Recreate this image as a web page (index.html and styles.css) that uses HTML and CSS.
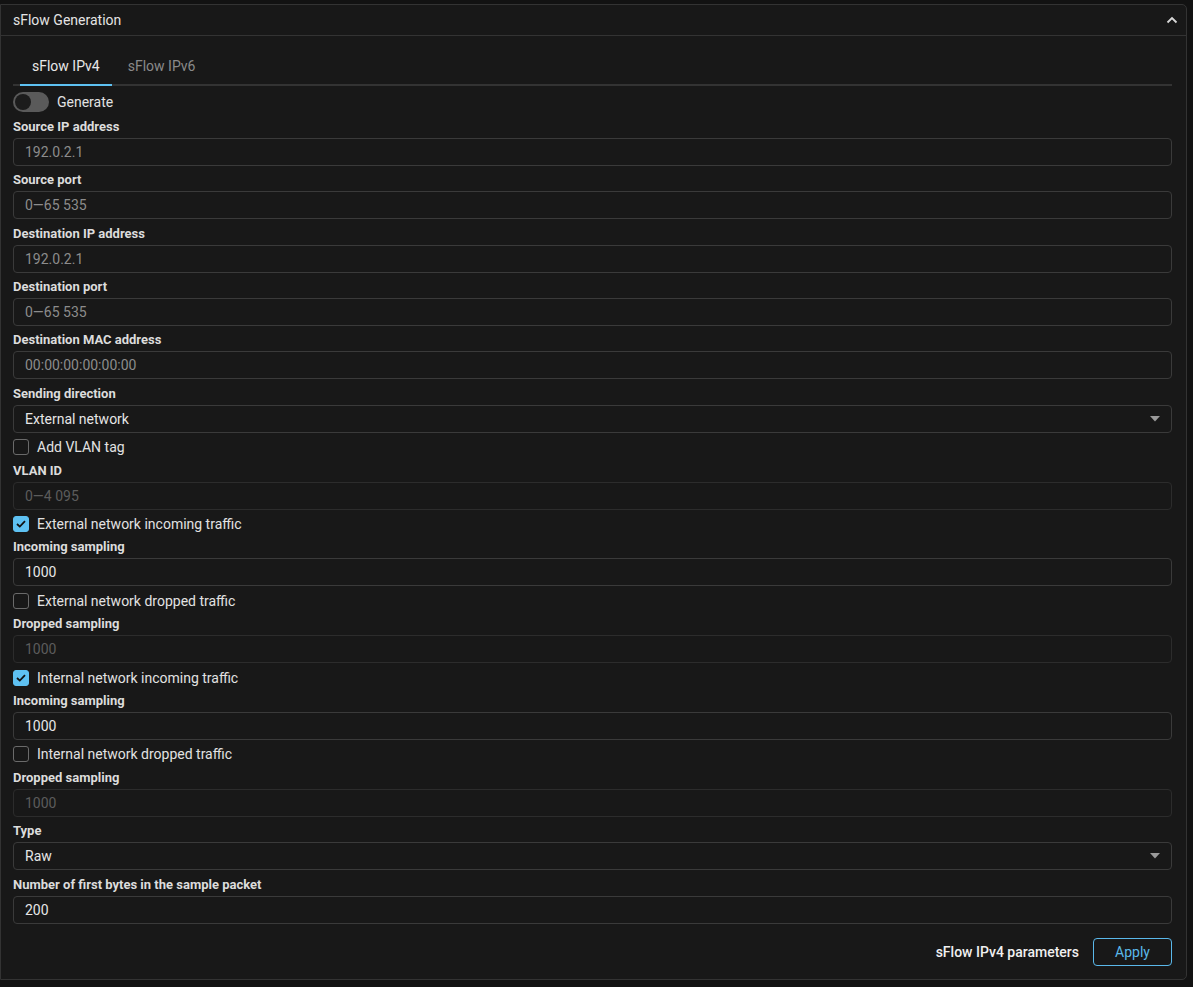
FILE: index.html
```html
<!DOCTYPE html>
<html lang="en">
<head>
    <meta charset="UTF-8">
    <title>sFlow Generation</title>
    <link rel="stylesheet" href="styles.css">
</head>
<body>
    <div class="card">
        <div class="card-header">
            <span>sFlow Generation</span>
            <svg class="chevron" width="12" height="8" viewBox="0 0 12 8"><path d="M1.5 6.5 L6 2 L10.5 6.5" fill="none" stroke="#d8d8d8" stroke-width="1.8"/></svg>
        </div>

        <div class="card-body">
            <div class="tabs">
                <div class="tab active">sFlow IPv4</div>
                <div class="tab">sFlow IPv6</div>
            </div>

            <div class="form">
                <label class="switch-row">
                    <span class="switch"><span class="knob"></span></span>
                    Generate
                </label>

                <div class="field">
                    <label>Source IP address</label>
                    <input type="text" placeholder="192.0.2.1">
                </div>
                <div class="field">
                    <label>Source port</label>
                    <input type="text" placeholder="0—65 535">
                </div>
                <div class="field">
                    <label>Destination IP address</label>
                    <input type="text" placeholder="192.0.2.1">
                </div>
                <div class="field">
                    <label>Destination port</label>
                    <input type="text" placeholder="0—65 535">
                </div>
                <div class="field">
                    <label>Destination MAC address</label>
                    <input type="text" placeholder="00:00:00:00:00:00">
                </div>
                <div class="field">
                    <label>Sending direction</label>
                    <div class="select">
                        <span>External network</span>
                        <svg width="10" height="6" viewBox="0 0 10 6"><path d="M0 0 H10 L5 5.5 Z" fill="#9a9a9a"/></svg>
                    </div>
                </div>

                <label class="check-row"><span class="box"></span>Add VLAN tag</label>
                <div class="field">
                    <label>VLAN ID</label>
                    <input type="text" placeholder="0—4 095" disabled>
                </div>

                <label class="check-row"><span class="box checked"><svg width="10" height="8" viewBox="0 0 10 8"><path d="M1 4 L3.8 6.6 L9 1.2" fill="none" stroke="#111" stroke-width="1.8"/></svg></span>External network incoming traffic</label>
                <div class="field">
                    <label>Incoming sampling</label>
                    <input type="text" value="1000">
                </div>

                <label class="check-row"><span class="box"></span>External network dropped traffic</label>
                <div class="field">
                    <label>Dropped sampling</label>
                    <input type="text" value="1000" disabled>
                </div>

                <label class="check-row"><span class="box checked"><svg width="10" height="8" viewBox="0 0 10 8"><path d="M1 4 L3.8 6.6 L9 1.2" fill="none" stroke="#111" stroke-width="1.8"/></svg></span>Internal network incoming traffic</label>
                <div class="field">
                    <label>Incoming sampling</label>
                    <input type="text" value="1000">
                </div>

                <label class="check-row"><span class="box"></span>Internal network dropped traffic</label>
                <div class="field">
                    <label>Dropped sampling</label>
                    <input type="text" value="1000" disabled>
                </div>

                <div class="field">
                    <label>Type</label>
                    <div class="select">
                        <span>Raw</span>
                        <svg width="10" height="6" viewBox="0 0 10 6"><path d="M0 0 H10 L5 5.5 Z" fill="#9a9a9a"/></svg>
                    </div>
                </div>
                <div class="field">
                    <label>Number of first bytes in the sample packet</label>
                    <input type="text" value="200">
                </div>
            </div>

            <div class="card-footer">
                <span class="footer-title">sFlow IPv4 parameters</span>
                <button class="btn-outline">Apply</button>
            </div>
        </div>
    </div>
</body>
</html>
```

FILE: styles.css
```css
body {
    margin: 0;
    padding: 4px 6px 7px 0;
    background: #121212;
    font-family: Roboto, 'Liberation Sans', sans-serif;
    font-size: 14px;
    color: #e2e2e2;
}

.card {
    background: #181818;
    border: 1px solid #333;
    border-radius: 0 5px 5px 0;
}

.card-header {
    height: 30px;
    display: flex;
    align-items: center;
    justify-content: space-between;
    padding: 0 8px 0 12px;
    border-bottom: 1px solid #333;
    color: #e4e4e4;
}

.chevron {
    margin-top: -1px;
}

.card-body {
    padding: 12px 14px 13px 12px;
}

.tabs {
    display: flex;
    gap: 4px;
    padding-left: 7px;
    border-bottom: 2px solid #333;
}

.tab {
    height: 36px;
    padding: 0 12px;
    display: flex;
    align-items: center;
    color: #8a8a8a;
    margin-bottom: -2px;
    border-bottom: 2px solid transparent;
}

.tab.active {
    color: #e8e8e8;
    border-bottom-color: #5ec1f2;
}

.form {
    display: flex;
    flex-direction: column;
    gap: 5.4px;
    margin-top: 6px;
}

.switch-row {
    display: flex;
    align-items: center;
    gap: 8px;
    height: 20px;
    margin-bottom: 0.5px;
    color: #e2e2e2;
}

.switch {
    width: 36px;
    height: 20px;
    border-radius: 10px;
    background: #5a5a5a;
    position: relative;
}

.knob {
    position: absolute;
    left: 2px;
    top: 2px;
    width: 16px;
    height: 16px;
    border-radius: 50%;
    background: #1c1c1c;
}

.field label {
    display: block;
    height: 17px;
    line-height: 17px;
    margin-bottom: 3px;
    font-size: 13px;
    font-weight: 700;
    color: #dcdcdc;
}

.field input,
.select {
    display: block;
    width: 100%;
    height: 28px;
    box-sizing: border-box;
    padding: 0 11px;
    background: #181818;
    border: 1px solid #3a3a3a;
    border-radius: 4px;
    font-family: Roboto, 'Liberation Sans', sans-serif;
    font-size: 14px;
    color: #e6e6e6;
    outline: none;
}

.field input::placeholder {
    color: #8c8c8c;
}

.field input:disabled {
    color: #5c5c5c;
    border-color: #2c2c2c;
}

.field input:disabled::placeholder {
    color: #5c5c5c;
}

.select {
    display: flex;
    align-items: center;
    justify-content: space-between;
    padding-right: 11px;
}

.check-row {
    display: flex;
    align-items: center;
    gap: 8px;
    height: 18px;
    color: #e2e2e2;
}

.box {
    width: 16px;
    height: 16px;
    box-sizing: border-box;
    border: 1.5px solid #6a6a6a;
    border-radius: 3px;
    display: flex;
    align-items: center;
    justify-content: center;
}

.box.checked {
    background: #5ec1f2;
    border-color: #5ec1f2;
}

.card-footer {
    display: flex;
    justify-content: flex-end;
    align-items: center;
    gap: 14px;
    margin-top: 14px;
}

.footer-title {
    font-weight: 500;
    color: #f0f0f0;
}

.btn-outline {
    width: 79px;
    height: 28px;
    background: transparent;
    border: 1px solid #5ab8ea;
    border-radius: 4px;
    color: #5ab8ea;
    font-family: Roboto, 'Liberation Sans', sans-serif;
    font-size: 14px;
    cursor: pointer;
}
```
